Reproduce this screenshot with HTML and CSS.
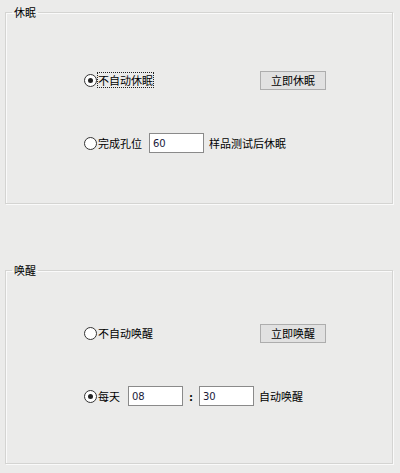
FILE: index.html
```html
<!DOCTYPE html>
<html lang="zh-CN">

<head>
  <meta charset="utf-8">
  <title>休眠 / 唤醒</title>
  <link rel="stylesheet" href="styles.css">
</head>

<body>
  <fieldset class="group group-sleep">
    <legend>休眠</legend>
    <div class="row row-first">
      <label class="choice choice-wide">
        <span class="radio checked"></span><span class="focus">不自动休眠</span>
      </label>
      <button class="btn">立即休眠</button>
    </div>
    <div class="row">
      <label class="choice">
        <span class="radio"></span><span>完成孔位</span>
      </label>
      <input class="field field-holes" type="text" value="60">
      <span class="tail">样品测试后休眠</span>
    </div>
  </fieldset>

  <fieldset class="group group-wake">
    <legend>唤醒</legend>
    <div class="row row-first">
      <label class="choice choice-wide">
        <span class="radio"></span><span>不自动唤醒</span>
      </label>
      <button class="btn">立即唤醒</button>
    </div>
    <div class="row">
      <label class="choice">
        <span class="radio checked"></span><span>每天</span>
      </label>
      <input class="field field-time" type="text" value="08">
      <span class="colon">:</span>
      <input class="field field-time" type="text" value="30">
      <span class="tail">自动唤醒</span>
    </div>
  </fieldset>
</body>

</html>
```

FILE: styles.css
```css
html, body {
	margin: 0;
	padding: 0;
}
body {
	background-color: #ebebea;
	width: 400px;
	height: 473px;
	overflow: hidden;
	font-family: "Noto Sans CJK SC", "Microsoft YaHei", sans-serif;
	font-size: 11px;
	color: #000;
	padding-top: 5px;
	box-sizing: border-box;
}
.group {
	margin: 0 0 0 5px;
	width: 388px;
	box-sizing: border-box;
	padding: 0;
	border: 1px solid #d4d4d2;
	box-shadow: inset 1px 1px 0 #fafafa, 1px 1px 0 #fafafa;
}
.group legend {
	margin-left: 6px;
	padding: 0 2px;
	line-height: 14px;
	height: 14px;
}
.group-sleep {
	height: 199px;
	margin-bottom: 59px;
}
.group-wake {
	height: 201px;
}
.group-sleep .row-first {
	margin-top: 51px;
}
.group-wake .row-first {
	margin-top: 46px;
}
.row {
	display: flex;
	align-items: center;
	height: 20px;
	margin-top: 43px;
	padding-left: 78px;
	white-space: nowrap;
}
.choice {
	display: flex;
	align-items: center;
	gap: 1px;
}
.choice-wide {
	width: 176px;
}
.radio {
	width: 11px;
	height: 11px;
	border: 1px solid #333;
	border-radius: 50%;
	background: #fff;
	position: relative;
	flex: none;
}
.radio.checked::after {
	content: "";
	position: absolute;
	left: 3px;
	top: 3px;
	width: 5px;
	height: 5px;
	border-radius: 50%;
	background: #222;
}
.focus {
	outline: 1px dotted #222;
	line-height: 14px;
}
.btn {
	width: 66px;
	height: 19px;
	padding: 0;
	font: inherit;
	color: #000;
	background: #e1e1e1;
	border: 1px solid #adadad;
	line-height: 15px;
}
.field {
	height: 20px;
	box-sizing: border-box;
	border: 1px solid #8a8a8a;
	background: #fff;
	font-family: "DejaVu Sans", sans-serif;
	font-size: 10px;
	color: #1a1a3a;
	padding: 0 3px;
	margin: 0;
}
.field-holes {
	width: 55px;
	margin-left: 7px;
}
.field-time {
	width: 55px;
}
.choice + .field-time {
	margin-left: 8px;
}
.colon {
	width: 16px;
	text-align: center;
	font-weight: bold;
}
.tail {
	margin-left: 5px;
}
```
